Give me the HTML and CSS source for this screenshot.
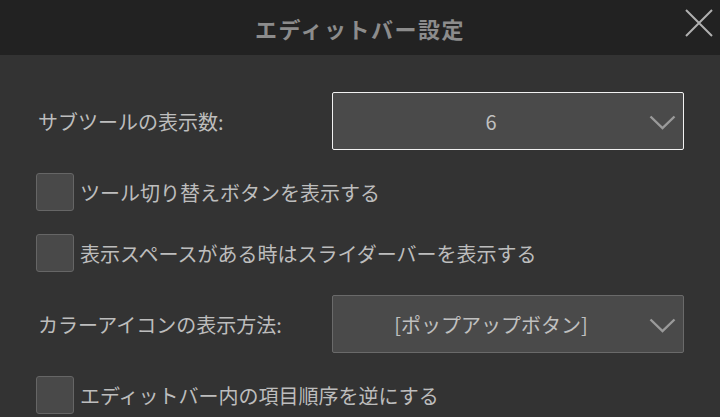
FILE: index.html
```html
<!DOCTYPE html>
<html lang="ja">
<head>
    <meta charset="UTF-8">
    <title>エディットバー設定</title>
    <link rel="stylesheet" href="styles.css">
</head>
<body>
    <div class="header">
        <div class="title">エディットバー設定</div>
        <button class="close" aria-label="閉じる">
            <svg width="28" height="28" viewBox="0 0 28 28">
                <path d="M1 1 L27 27 M27 1 L1 27" stroke="#b0b0b0" stroke-width="2" fill="none"/>
            </svg>
        </button>
    </div>

    <div class="content">
        <div class="row">
            <div class="label">サブツールの表示数:</div>
            <div class="select focused">
                <span class="value">6</span>
                <svg class="chevron" width="27" height="15" viewBox="0 0 27 15">
                    <path d="M1.5 1.5 L13.5 13 L25.5 1.5" stroke="#9a9a9a" stroke-width="2.4" fill="none"/>
                </svg>
            </div>
        </div>

        <label class="check-row">
            <span class="checkbox"></span>
            <span class="check-text">ツール切り替えボタンを表示する</span>
        </label>

        <label class="check-row">
            <span class="checkbox"></span>
            <span class="check-text">表示スペースがある時はスライダーバーを表示する</span>
        </label>

        <div class="row">
            <div class="label">カラーアイコンの表示方法:</div>
            <div class="select">
                <span class="value">[ポップアップボタン]</span>
                <svg class="chevron" width="27" height="15" viewBox="0 0 27 15">
                    <path d="M1.5 1.5 L13.5 13 L25.5 1.5" stroke="#9a9a9a" stroke-width="2.4" fill="none"/>
                </svg>
            </div>
        </div>

        <label class="check-row">
            <span class="checkbox"></span>
            <span class="check-text">エディットバー内の項目順序を逆にする</span>
        </label>
    </div>
</body>
</html>
```

FILE: styles.css
```css
body {
    margin: 0;
    background: #333333;
    font-family: "Noto Sans CJK JP", "Noto Sans", sans-serif;
    color: #bdbdbd;
    overflow: hidden;
}

.header {
    position: relative;
    height: 55px;
    background: #222222;
    display: flex;
    justify-content: center;
    align-items: center;
}

.title {
    font-size: 22px;
    font-weight: bold;
    color: #8c8c8c;
    letter-spacing: 1.5px;
}

.close {
    position: absolute;
    right: 7px;
    top: 9px;
    width: 28px;
    height: 28px;
    padding: 0;
    border: none;
    background: none;
}

.content {
    padding: 37px 0 0 36px;
    display: flex;
    flex-direction: column;
    gap: 23px;
}

.row {
    display: flex;
    align-items: center;
}

.label {
    width: 294px;
    padding-left: 2px;
    font-size: 20px;
}

.select {
    box-sizing: border-box;
    width: 352px;
    height: 58px;
    padding-right: 34px;
    background: #4a4a4a;
    border: 1px solid #6a6a6a;
    border-radius: 2px;
    display: flex;
    align-items: center;
    justify-content: center;
    position: relative;
    font-size: 20px;
    color: #c0c0c0;
}

.select.focused {
    border-color: #f2f2f2;
}

.chevron {
    position: absolute;
    right: 7px;
    top: 22px;
}

.check-row {
    display: flex;
    align-items: center;
    gap: 6px;
    height: 38px;
}

.checkbox {
    box-sizing: border-box;
    width: 38px;
    height: 38px;
    background: #494949;
    border: 1px solid #666666;
    border-radius: 3px;
}

.check-text {
    font-size: 20px;
}
```
